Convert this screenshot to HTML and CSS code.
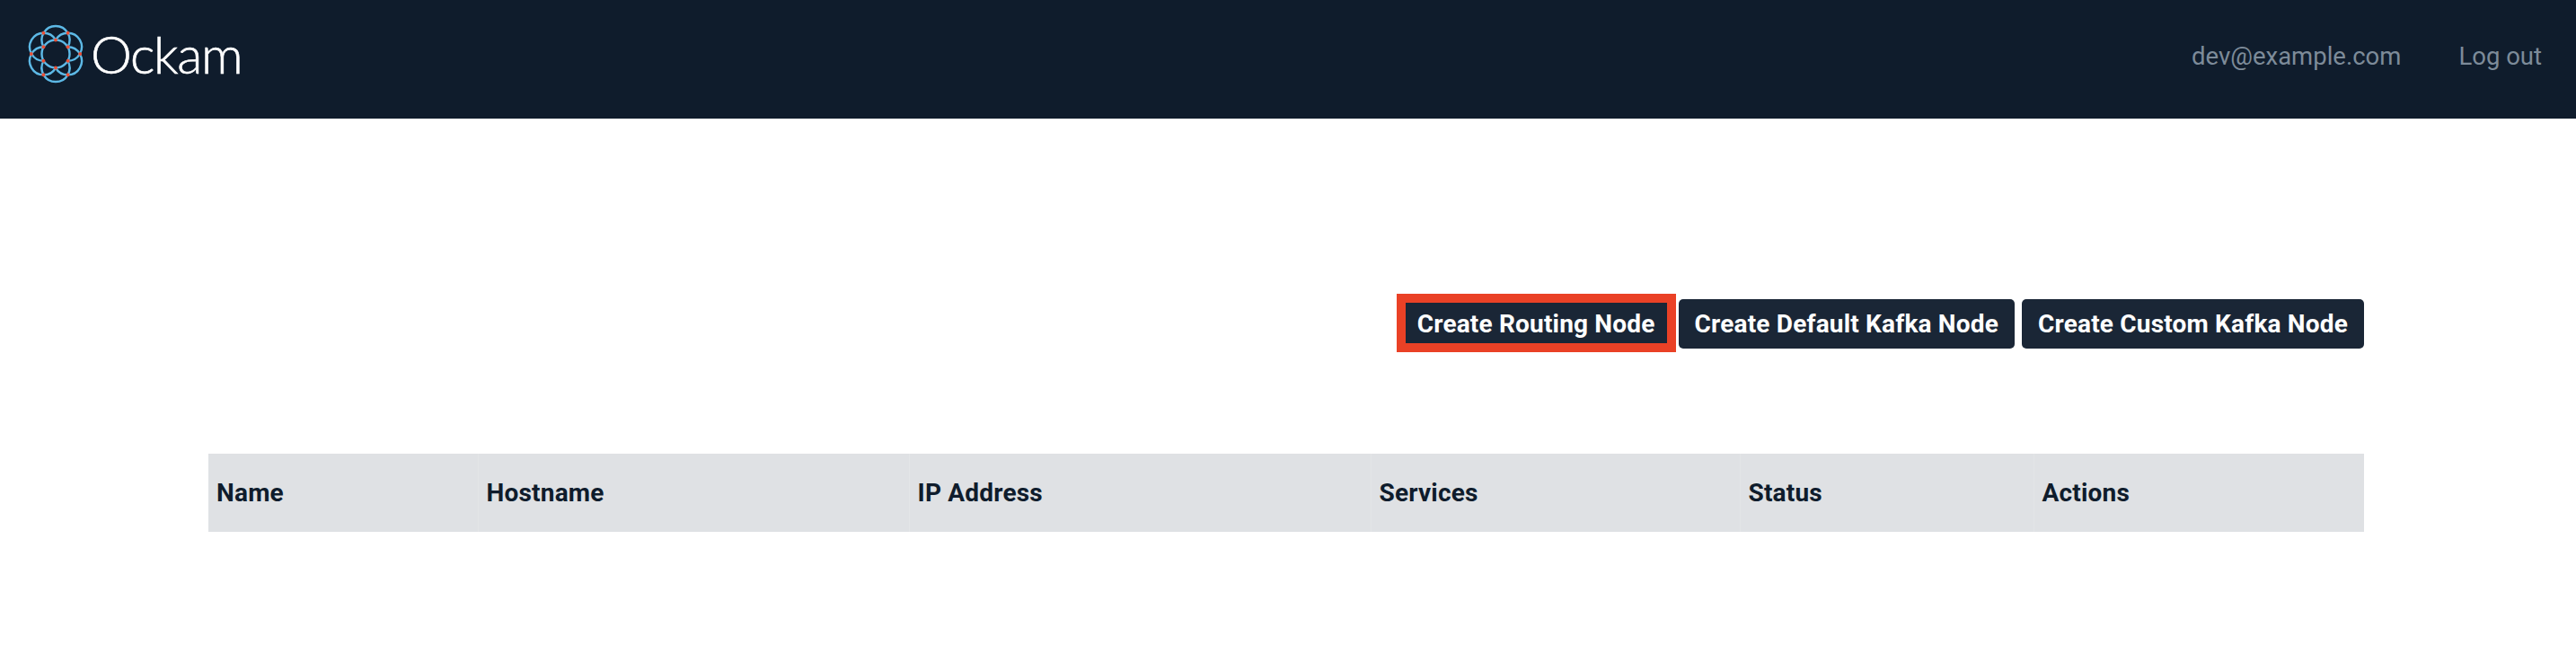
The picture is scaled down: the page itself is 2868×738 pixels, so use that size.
FILE: index.html
```html
<!DOCTYPE html>
<html lang="en">
  <head>
    <meta charset="UTF-8" />
    <title>Ockam</title>
    <link rel="stylesheet" href="styles.css">
  </head>
  <body>
    <header id="top-bar">
      <a class="brand" href="#">
        <svg class="brand-mark" viewBox="-34 -34 68 68" aria-hidden="true">
          <g class="petals">
            <circle r="16" />
            <path d="M-13.86 -8A16 16 0 1 1 13.86 -8" />
            <path d="M-13.86 -8A16 16 0 1 1 13.86 -8" transform="rotate(60)" />
            <path d="M-13.86 -8A16 16 0 1 1 13.86 -8" transform="rotate(120)" />
            <path d="M-13.86 -8A16 16 0 1 1 13.86 -8" transform="rotate(180)" />
            <path d="M-13.86 -8A16 16 0 1 1 13.86 -8" transform="rotate(240)" />
            <path d="M-13.86 -8A16 16 0 1 1 13.86 -8" transform="rotate(300)" />
          </g>
          <g class="knots">
            <circle cx="-14" cy="-24" r="2" />
            <circle cx="14" cy="-24" r="2" />
            <circle cx="-28" cy="0" r="2" />
            <circle cx="28" cy="0" r="2" />
            <circle cx="-14" cy="24" r="2" />
            <circle cx="14" cy="24" r="2" />
            <circle cx="0" cy="-16" r="2" />
            <circle cx="0" cy="16" r="2" />
            <circle cx="-14" cy="-8" r="2" />
            <circle cx="14" cy="-8" r="2" />
            <circle cx="-14" cy="8" r="2" />
            <circle cx="14" cy="8" r="2" />
          </g>
        </svg>
        <span class="brand-name">Ockam</span>
      </a>
      <nav class="account">
        <span>dev@example.com</span>
        <a href="#">Log out</a>
      </nav>
    </header>

    <main id="content">
      <div class="actions">
        <button class="marked">Create Routing Node</button>
        <button>Create Default Kafka Node</button>
        <button>Create Custom Kafka Node</button>
      </div>

      <table class="nodes">
        <thead>
          <tr>
            <th class="col-name">Name</th>
            <th class="col-host">Hostname</th>
            <th class="col-ip">IP Address</th>
            <th class="col-services">Services</th>
            <th class="col-status">Status</th>
            <th>Actions</th>
          </tr>
        </thead>
      </table>
    </main>
  </body>
</html>
```

FILE: styles.css
```css
* {
  margin: 0;
  padding: 0;
  box-sizing: border-box;
}

:root {
  --navy: #0f1c2c;
  --button: #1a2636;
  --muted: #7d8b99;
  --marker: #ea4126;
}

body {
  background-color: #fff;
  color: var(--navy);
  font-family: Roboto, "Noto Sans", sans-serif;
  font-size: 28px;
}

a {
  color: inherit;
  text-decoration: none;
}

#top-bar {
  display: flex;
  justify-content: space-between;
  align-items: center;
  height: 132px;
  padding: 0 38px 12px 29px;
  background-color: var(--navy);
}

.brand {
  display: flex;
  align-items: center;
  gap: 6px;
}

.brand-mark {
  width: 66px;
  height: 66px;
}

.petals {
  fill: none;
  stroke: #5db9e6;
  stroke-width: 2.5;
}

.knots {
  fill: #ea4f35;
}

.brand-name {
  color: #fff;
  font-family: Lato, sans-serif;
  font-size: 58px;
  font-weight: 300;
  letter-spacing: -1.4px;
  line-height: 1;
  -webkit-text-stroke: 0.6px #fff;
}

.account {
  display: flex;
  gap: 64px;
  padding-top: 4px;
  color: var(--muted);
  font-size: 27.5px;
}

#content {
  padding: 201px 236px 0 232px;
}

.actions {
  display: flex;
  justify-content: flex-end;
  gap: 8px;
}

button {
  height: 55px;
  padding: 0 18px;
  border: none;
  border-radius: 5px;
  background-color: var(--button);
  color: #fff;
  font-family: inherit;
  font-size: 28px;
  font-weight: 700;
  letter-spacing: 0.18px;
}

.marked {
  position: relative;
}

.marked::after {
  content: "";
  position: absolute;
  inset: -6px -5px -4px;
  border: 10px solid var(--marker);
}

.nodes {
  width: 100%;
  margin-top: 117px;
  border-collapse: collapse;
  table-layout: fixed;
}

th {
  height: 87px;
  padding: 0 9px;
  border-left: 1px solid #e3e5e7;
  background-color: #dfe1e4;
  font-weight: 700;
  letter-spacing: 0.2px;
  text-align: left;
}

th:first-child {
  border-left: none;
}

.col-name {
  width: 300px;
}

.col-host {
  width: 480px;
}

.col-ip {
  width: 514px;
}

.col-services {
  width: 411px;
}

.col-status {
  width: 327px;
}
```
